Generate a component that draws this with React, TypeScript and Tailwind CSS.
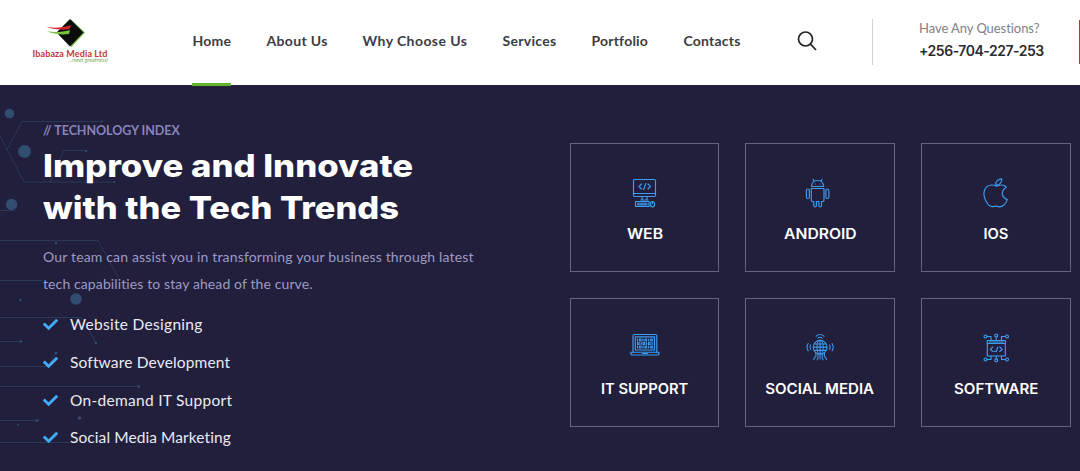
import React from 'react';
import { FaCheck } from 'react-icons/fa';

interface NavItem {
  label: string;
  active?: boolean;
  className: string;
}

interface Tech {
  label: string;
  icon: React.ReactNode;
  className: string;
}

const navItems: NavItem[] = [
  { label: 'Home', active: true, className: 'w-[39px] tracking-[0.25px]' },
  { label: 'About Us', className: 'w-[61px] tracking-[0.35px]' },
  { label: 'Why Choose Us', className: 'w-[105px] tracking-[0.42px]' },
  { label: 'Services', className: 'w-[54px] tracking-[0.3px]' },
  { label: 'Portfolio', className: 'w-[57px] tracking-[0.2px]' },
  { label: 'Contacts', className: 'w-[58px] tracking-[0.22px]' },
];

const features = [
  { label: 'Website Designing', className: 'tracking-[0.3px]' },
  { label: 'Software Development', className: 'tracking-[0.16px]' },
  { label: 'On-demand IT Support', className: 'tracking-[0.29px]' },
  { label: 'Social Media Marketing', className: 'tracking-[0.08px]' },
];

const Icon: React.FC<{ children: React.ReactNode }> = ({ children }) => (
  <svg
    viewBox="0 0 30 30"
    className="h-[30px] w-[30px] text-[#3c9df2]"
    fill="none"
    stroke="currentColor"
    strokeWidth="1.15"
    strokeLinecap="round"
    strokeLinejoin="round"
  >
    {children}
  </svg>
);

const WebIcon = () => (
  <Icon>
    <rect x="3.5" y="1.5" width="22" height="17" rx="1.2" />
    <path d="M3.5 15.5h22M12 18.5V22M17 18.5V22M11 22h7" />
    <path d="M11.5 6 9 8.500l2.500 2.500M18 6l2.500 2.500L18 11M15.800 5.500l-2.200 6" />
    <path d="M5.500 23.500h13.500v5h-13.500zM7.500 25.200h9.500M7.500 26.900h9.500" />
    <rect x="20.500" y="23.500" width="4" height="5.300" rx="2" />
    <path d="M22.500 23.500v2" />
  </Icon>
);

const AndroidIcon = () => (
  <Icon>
    <g transform="translate(-2.2 0)">
      <path d="M8.800 8.500c.2-3.800 2.800-6 6-6s5.800 2.200 6 6zM11.500 3.500 10.300 1.300M18.100 3.500l1.200-2.200" />
      <path d="M12.500 6h.1M17.200 6h.1" />
      <path d="M8.500 10.500h12.700v11.700c0 .8-.5 1.300-1.300 1.300h-1.200v4c0 1-.6 1.500-1.300 1.500s-1.300-.5-1.300-1.500v-4h-2.500v4c0 1-.6 1.500-1.300 1.500S11 28.500 11 27.500v-4H9.800c-.8 0-1.300-.5-1.300-1.300z" />
      <rect x="3.600" y="11" width="3" height="9.500" rx="1.500" />
      <rect x="23.100" y="11" width="3" height="9.500" rx="1.500" />
    </g>
  </Icon>
);

const AppleIcon = () => (
  <Icon>
    <path d="M25.500 9.300C23.500 7 20 6.300 15.800 8.300 11.500 6.300 7.700 6.700 5.200 9.300c-3.500 3.500-2.700 10 .1 14.500 1.900 3.200 4.200 5.400 6.800 4.800 1.900-.5 3.200-.8 5.200 0 3.800 1.300 7.500-2.600 9-7-3.700-1.500-5.300-3.900-4.900-6.900.2-2.200 1.900-4.200 4.100-5.400z" />
    <path d="M14.800 7.200c-.4-3.400 2.200-6.400 6-6.400.3 3.500-2.200 6.300-6 6.400z" />
  </Icon>
);

const LaptopIcon = () => (
  <Icon>
    <g transform="translate(0 -1)">
      <path d="M3 20.700V4C3 3 3.500 2.500 4.500 2.500h20.800c1 0 1.500.5 1.500 1.500v16.700" />
      <rect x="5.300" y="4.800" width="19.200" height="13.200" />
      <path d="M.8 20.200h28.200v1c0 1-.9 1.800-2 1.800H2.800c-1.100 0-2-.8-2-1.800zM12.500 21.500h5" />
      <path d="M7.500 7v2M9.500 7h1.600v2H9.500zM13 7v2M15 7h1.600v2H15zM18.700 7v2M20.700 7h1.600v2h-1.600zM7.500 10.500h1.600v2H7.500zM11.200 10.500v2M13 10.500h1.600v2H13zM16.500 10.500v2M18.500 10.500h1.600v2h-1.600zM22.200 10.500v2M7.500 14v2M9.500 14h1.600v2H9.500zM13 14v2M15 14h1.600v2H15zM18.700 14v2M20.700 14h1.600v2h-1.600z" />
    </g>
  </Icon>
);

const GlobeIcon = () => (
  <Icon>
    <g transform="translate(1.500 .8) scale(.92)">
      <circle cx="14.800" cy="14.500" r="7.500" />
      <ellipse cx="14.800" cy="14.500" rx="3.400" ry="7.500" />
      <path d="M7.300 14.500h15M8.500 11h12.600M8.500 18h12.600M14.800 7v20.500" />
      <path d="M10.500 2.500c2.500-2.300 6.100-2.300 8.600 0M12.500 4.700c1.400-1.200 3.200-1.200 4.600 0" />
      <path d="M4.500 12c-.9 1.500-.9 3.500 0 5M1.800 10.500c-1.600 2.600-1.600 5.400 0 8" />
      <path d="M25.100 12c.9 1.500.9 3.500 0 5M27.800 10.500c1.600 2.600 1.600 5.400 0 8" />
      <path d="M12.500 22v4.500M10.200 21v3.500L8 27v1M17.100 22v4.500M19.400 21v3.500l2.200 2.500v1M12.500 26.500l-1 1.800M17.100 26.500l1 1.800" />
    </g>
  </Icon>
);

const SoftwareIcon = () => (
  <Icon>
    <rect x="6.300" y="7.500" width="18" height="15.500" />
    <path d="M6.300 10.500h18M8.300 9h14" />
    <path d="M11.800 14 9.300 16.300l2.500 2.200M18.800 14l2.500 2.300-2.500 2.200M13.300 18.500h1M16.800 14l-1.600 4.500" />
    <circle cx="4.500" cy="3.500" r="1.500" />
    <circle cx="15.300" cy="2.500" r="1.500" />
    <circle cx="26" cy="3.500" r="1.500" />
    <circle cx="4.500" cy="26.500" r="1.500" />
    <circle cx="15.300" cy="27.300" r="1.500" />
    <circle cx="26" cy="26.500" r="1.500" />
    <path d="M6 3.500h4v4M15.300 4v3.500M24.500 3.500h-4v4M6 26.500h4V23M15.300 25.800V23M24.500 26.500h-4V23" />
  </Icon>
);

const techs: Tech[] = [
  { label: 'WEB', icon: <WebIcon />, className: 'scale-x-[1.13]' },
  { label: 'ANDROID', icon: <AndroidIcon />, className: 'scale-x-[1.12]' },
  { label: 'IOS', icon: <AppleIcon />, className: 'scale-x-[1.05]' },
  { label: 'IT SUPPORT', icon: <LaptopIcon />, className: 'scale-x-[1.05]' },
  { label: 'SOCIAL MEDIA', icon: <GlobeIcon />, className: 'scale-x-[1.075]' },
  { label: 'SOFTWARE', icon: <SoftwareIcon />, className: 'scale-x-[1.075]' },
];

const Logo = () => (
  <div className="flex w-[80px] flex-col items-center pt-[18px]">
    <svg viewBox="0 0 42 30" className="mr-[10px] h-[30px] w-[42px]">
      <path d="M27 1.500 41 14.500 27.500 29 14.500 15.500z" fill="#76c043" />
      <path d="M26 1 39.500 14.500 26 28.500 12.500 14.500z" fill="#0b0d0c" />
      <path d="M1 8.300c8 2.500 17 1.500 26-1.300l-1.500 4C18 12 9 12 1 8.300z" fill="#d3232b" />
      <path d="M3 13.300c8 1.500 15 .8 23-1.300l-1 4c-8 1-15 .3-22-2.700z" fill="#7cc142" />
    </svg>
    <span className="mt-[1px] whitespace-nowrap text-[9px] font-bold leading-[10px] tracking-[0.12px] text-[#c9343b]">Ibabaza Media Ltd</span>
    <span className="-mt-[2px] mr-[2px] self-end whitespace-nowrap text-[5.500px] italic leading-[6px] text-[#7fae5c]">...meet greatness!</span>
  </div>
);

const Header = () => (
  <header className="flex h-[85px] bg-white">
    <div className="w-[192.500px] shrink-0 pl-[30px]">
      <Logo />
    </div>
    <nav className="flex shrink-0 gap-[35px]">
      {navItems.map((item) => (
        <a
          key={item.label}
          href="#"
          className={`relative flex h-[83px] items-center whitespace-nowrap pb-[2px] text-[14px] font-bold text-[#3c3c42] ${item.className}`}
        >
          {item.label}
          {item.active && <span className="absolute -bottom-[3px] -left-[0.5px] z-10 h-[3px] w-full bg-[#62b32b]" />}
        </a>
      ))}
    </nav>
    <button aria-label="Search" className="ml-[55px] mt-[31px] h-[20px] w-[20px] shrink-0">
      <svg viewBox="0 0 20 20" className="h-[20px] w-[20px]" fill="none" stroke="#25252b" strokeWidth="1.700">
        <circle cx="8.500" cy="8" r="7" />
        <path d="m13.500 13.200 5.500 5.800" />
      </svg>
    </button>
    <div className="ml-[55.500px] mt-[19px] h-[46px] w-px shrink-0 bg-[#d4d4d6]" />
    <div className="ml-[46px] mt-[18px] w-[160px] shrink-0 whitespace-nowrap">
      <p className="text-[13px] leading-[20px] tracking-[-0.06px] text-[#808086]">Have Any Questions?</p>
      <p className="mt-[3px] font-['Inter'] text-[14px] font-semibold leading-[20px] tracking-[-0.48px] text-[#2b2b31]">+256-704-227-253</p>
    </div>
    <div className="mt-[20px] h-[44px] w-[2px] shrink-0 bg-[#b53538]" />
  </header>
);

const Circuit = () => (
  <svg viewBox="0 0 240 386" className="absolute left-0 top-0 h-[386px] w-[240px]" fill="none">
    <g stroke="#2d4464" strokeWidth="1" opacity="0.7">
      <path d="M102 36.500H22L7 65M0 51l24 46h90M50 97l14-31.500h22M0 125.500h15M0 155.500h98l22 40M0 195.500h42M0 232.500h82l14 25.500M0 256.500h21M0 281.500h48l8-14M0 301.500h139M0 335.500h37M0 357.500h78" />
    </g>
    <g fill="#314d70">
      <circle cx="9.500" cy="28.500" r="4.800" />
      <circle cx="24.500" cy="66.500" r="6.500" />
      <circle cx="11.500" cy="119.500" r="5.700" />
      <circle cx="76" cy="214" r="5.800" />
      <circle cx="21" cy="256.500" r="1.300" />
      <circle cx="96" cy="258" r="1.300" />
      <circle cx="139" cy="301.500" r="1.300" />
      <circle cx="37" cy="335.500" r="1.500" />
      <circle cx="79.500" cy="333" r="1.800" />
      <circle cx="18" cy="340" r="1" />
      <circle cx="20.500" cy="215" r="1.200" />
      <circle cx="56" cy="158" r="1.300" />
      <circle cx="86" cy="66" r="1.200" />
      <circle cx="102" cy="36.500" r="1" />
      <circle cx="114" cy="97" r="1" />
      <circle cx="56" cy="268" r="1.300" />
    </g>
  </svg>
);

const Intro = () => (
  <div className="relative w-[570px] shrink-0 whitespace-nowrap pl-[43px] pt-[36px]">
    <p className="text-[12.500px] font-bold leading-[20px] tracking-[-0.05px] text-[#8a83ba]">// TECHNOLOGY INDEX</p>
    <h1 className="mt-[4px] font-['Inter'] text-[31.500px] font-extrabold leading-[42px] text-white">
      <span className="block origin-left scale-x-[1.102]">Improve and Innovate</span>
      <span className="block origin-left scale-x-[1.094]">with the Tech Trends</span>
    </h1>
    <p className="mt-[15px] text-[14px] leading-[26.500px] text-[#9f99c6]">
      <span className="block tracking-[0.17px]">Our team can assist you in transforming your business through latest</span>
      <span className="block tracking-[0.11px]">tech capabilities to stay ahead of the curve.</span>
    </p>
    <ul className="mt-[9px]">
      {features.map((feature) => (
        <li key={feature.label} className="flex h-[37.700px] items-center text-[15.500px] text-[#ebeaf3]">
          <FaCheck className="mr-[12px] h-[15px] w-[15px] text-[#43aaf8]" />
          <span className={feature.className}>{feature.label}</span>
        </li>
      ))}
    </ul>
  </div>
);

const App = () => (
  <div className="h-[471px] w-[1080px] overflow-hidden font-['Lato',sans-serif]">
    <Header />
    <main className="relative flex h-[386px] bg-[#211f3b]">
      <Circuit />
      <Intro />
      <div className="mt-[58px] grid h-[285px] grid-cols-[149px_150px_150px] grid-rows-[129px_129px] gap-x-[26px] gap-y-[26px]">
        {techs.map((tech) => (
          <div key={tech.label} className="flex flex-col items-center border border-[#66657a] pt-[34px]">
            {tech.icon}
            <h2 className={`mt-[16px] whitespace-nowrap font-['Inter'] text-[14px] font-semibold leading-[20px] text-white ${tech.className}`}>
              {tech.label}
            </h2>
          </div>
        ))}
      </div>
    </main>
  </div>
);

export default App;
